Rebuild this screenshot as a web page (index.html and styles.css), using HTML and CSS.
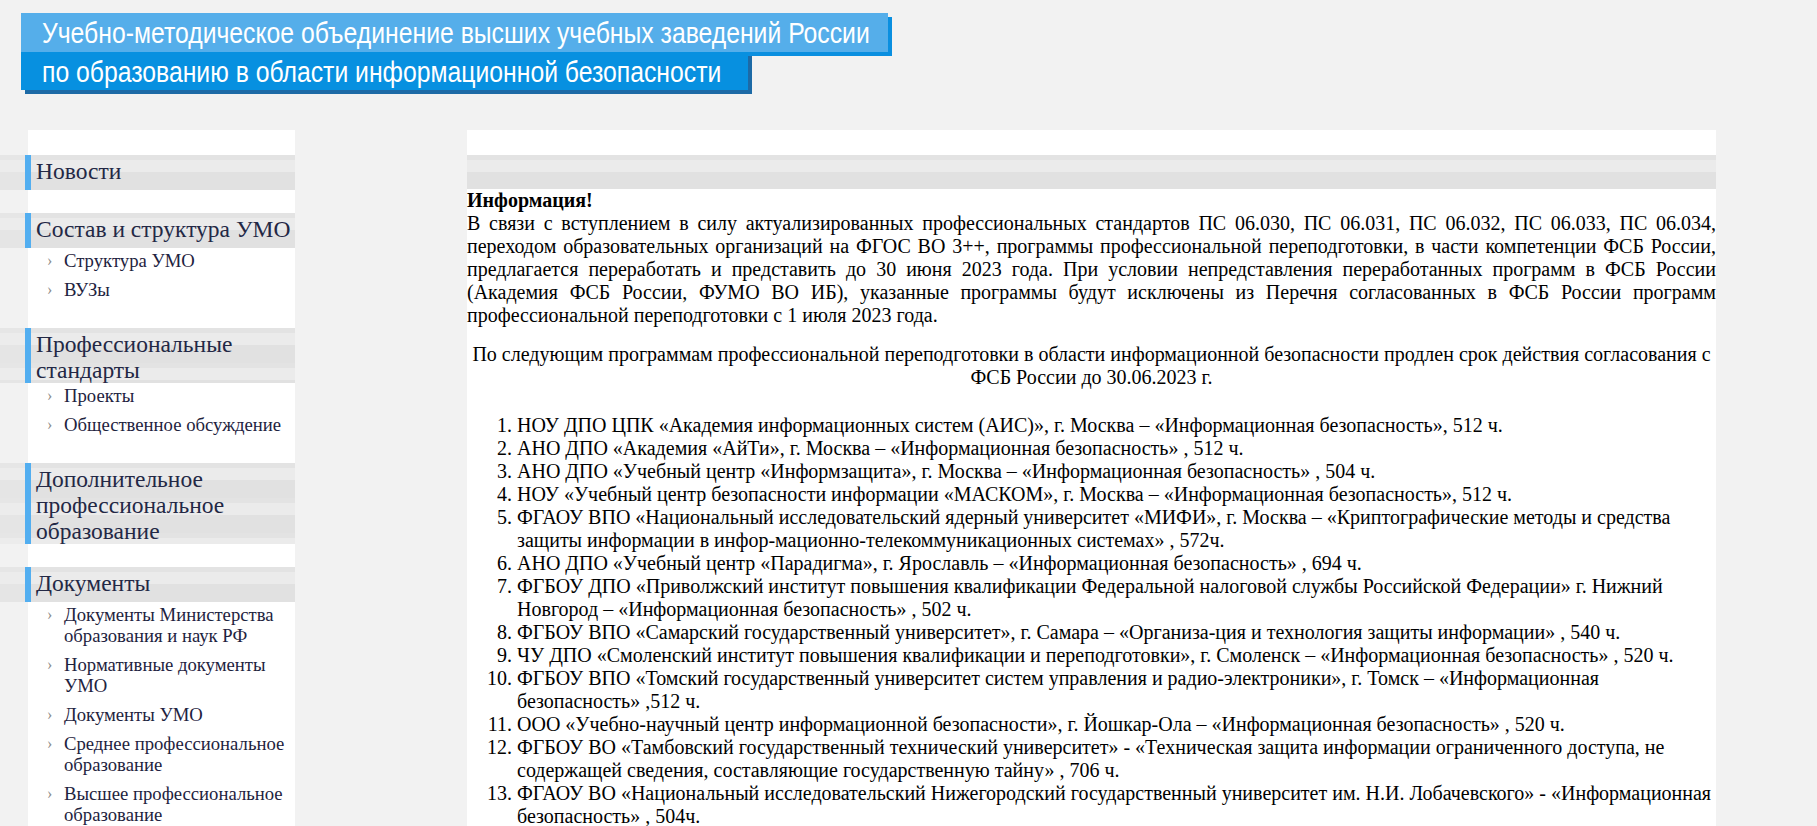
FILE: index.html
```html
<!DOCTYPE html>
<html lang="ru">
<head>
<meta charset="utf-8">
<title>УМО ИБ</title>
<link rel="stylesheet" href="styles.css">
</head>
<body>
<header class="site-header">
  <div class="banner">
    <div class="bar bar-top"><span class="bar-text">Учебно-методическое объединение высших учебных заведений России</span></div>
    <div class="bar bar-bottom"><span class="bar-text">по образованию в области информационной безопасности</span></div>
  </div>
</header>
<div class="layout">
  <aside class="sidebar">
    <section class="menu-block">
      <h2 class="menu-title">Новости</h2>
    </section>
    <section class="menu-block">
      <h2 class="menu-title">Состав и структура УМО</h2>
      <ul class="menu-list">
        <li>Структура УМО</li>
        <li>ВУЗы</li>
      </ul>
    </section>
    <section class="menu-block">
      <h2 class="menu-title">Профессиональные стандарты</h2>
      <ul class="menu-list">
        <li>Проекты</li>
        <li>Общественное обсуждение</li>
      </ul>
    </section>
    <section class="menu-block">
      <h2 class="menu-title">Дополнительное профессиональное образование</h2>
    </section>
    <section class="menu-block">
      <h2 class="menu-title">Документы</h2>
      <ul class="menu-list">
        <li>Документы Министерства образования и наук РФ</li>
        <li>Нормативные документы УМО</li>
        <li>Документы УМО</li>
        <li>Среднее профессиональное образование</li>
        <li>Высшее профессиональное образование</li>
      </ul>
    </section>
  </aside>
  <main class="content">
    <div class="content-band"></div>
    <article class="article">
      <p class="intro"><strong>Информация!</strong><br>В связи с вступлением в силу актуализированных профессиональных стандартов ПС 06.030, ПС 06.031, ПС 06.032, ПС 06.033, ПС 06.034, переходом образовательных организаций на ФГОС ВО 3++, программы профессиональной переподготовки, в части компетенции ФСБ России, предлагается переработать и представить до 30 июня 2023 года. При условии непредставления переработанных программ в ФСБ России (Академия ФСБ России, ФУМО ВО ИБ), указанные программы будут исключены из Перечня согласованных в ФСБ России программ профессиональной переподготовки с 1 июля 2023 года.</p>
      <p class="centered">По следующим программам профессиональной переподготовки в области информационной безопасности продлен срок действия согласования с ФСБ России до 30.06.2023 г.</p>
      <ol class="programs">
        <li>НОУ ДПО ЦПК «Академия информационных систем (АИС)», г. Москва – «Информационная безопасность», 512 ч.</li>
        <li>АНО ДПО «Академия «АйТи», г. Москва – «Информационная безопасность» , 512 ч.</li>
        <li>АНО ДПО «Учебный центр «Информзащита», г. Москва – «Информационная безопасность» , 504 ч.</li>
        <li>НОУ «Учебный центр безопасности информации «МАСКОМ», г. Москва – «Информационная безопасность», 512 ч.</li>
        <li>ФГАОУ ВПО «Национальный исследовательский ядерный университет «МИФИ», г. Москва – «Криптографические методы и средства защиты информации в инфор-мационно-телекоммуникационных системах» , 572ч.</li>
        <li>АНО ДПО «Учебный центр «Парадигма», г. Ярославль – «Информационная безопасность» , 694 ч.</li>
        <li>ФГБОУ ДПО «Приволжский институт повышения квалификации Федеральной налоговой службы Российской Федерации» г. Нижний Новгород – «Информационная безопасность» , 502 ч.</li>
        <li>ФГБОУ ВПО «Самарский государственный университет», г. Самара – «Организа-ция и технология защиты информации» , 540 ч.</li>
        <li>ЧУ ДПО «Смоленский институт повышения квалификации и переподготовки», г. Смоленск – «Информационная безопасность» , 520 ч.</li>
        <li>ФГБОУ ВПО «Томский государственный университет систем управления и радио-электроники», г. Томск – «Информационная безопасность» ,512 ч.</li>
        <li>ООО «Учебно-научный центр информационной безопасности», г. Йошкар-Ола – «Информационная безопасность» , 520 ч.</li>
        <li>ФГБОУ ВО «Тамбовский государственный технический университет» - «Техническая защита информации ограниченного доступа, не содержащей сведения, составляющие государственную тайну» , 706 ч.</li>
        <li>ФГАОУ ВО «Национальный исследовательский Нижегородский государственный университет им. Н.И. Лобачевского» - «Информационная безопасность» , 504ч.</li>
      </ol>
    </article>
  </main>
</div>
</body>
</html>
```

FILE: styles.css
```css
html, body {
  margin: 0;
  padding: 0;
}
body {
  background: #f2f2f2;
  font-family: "Liberation Serif", "Times New Roman", serif;
  color: #000;
  min-width: 1817px;
}

/* ---------- header banner ---------- */
.site-header {
  padding: 13px 0 0 21px;
  height: 130px;
  box-sizing: border-box;
}
.banner {
  display: flex;
  flex-direction: column;
  align-items: flex-start;
}
.bar {
  display: flex;
  align-items: center;
  box-sizing: border-box;
  padding-left: 21px;
  color: #fff;
  font-family: "Liberation Sans", Arial, sans-serif;
  font-size: 30px;
  white-space: nowrap;
  overflow: visible;
}
.bar-top {
  width: 867px;
  height: 39px;
  background: #55aeea;
  box-shadow: 4px 4px 0 #0a8fe0;
  position: relative;
  z-index: 1;
}
.bar-bottom {
  width: 727px;
  height: 38px;
  background: #0790e0;
  box-shadow: 4px 4px 0 #1d6aa6;
  position: relative;
  z-index: 2;
}
.bar-text {
  display: inline-block;
  line-height: 1;
  transform: scaleX(0.825);
  transform-origin: 0 50%;
  margin-top: 1px;
}

/* ---------- layout ---------- */
.layout {
  display: flex;
  align-items: flex-start;
  padding-left: 28px;
  gap: 172px;
}

/* ---------- sidebar ---------- */
.sidebar {
  width: 267px;
  flex: none;
  background: #fff;
  padding-top: 25px;
  min-height: 720px;
}
.menu-block {
  margin-bottom: 23px;
}
.menu-title {
  position: relative;
  margin: 0 0 0 -3px;
  min-height: 35px;
  box-sizing: border-box;
  padding: 3px 0 0 5px;
  border-left: 6px solid #52aef0;
  background: linear-gradient(#e3e3e3 0, #e3e3e3 5px, #ebebeb 5px, #ebebeb 17px, #e1e1e1 17px, #e1e1e1 35px) 0 0 / 100% 35px repeat-y;
  font-family: "Liberation Serif", Georgia, serif;
  font-weight: normal;
  font-size: 23.5px;
  line-height: 26px;
  color: #232845;
}
.menu-title::before {
  content: "";
  position: absolute;
  top: 0;
  bottom: 0;
  left: -31px;
  width: 25px;
  background: linear-gradient(#e6e6e6 0, #e6e6e6 5px, #ececec 5px, #ececec 17px, #e5e5e5 17px, #e5e5e5 35px) 0 0 / 100% 35px repeat-y;
}
.menu-list {
  list-style: none;
  margin: 0;
  padding: 2px 2px 5px 0;
}
.menu-list li {
  display: flex;
  font-family: "Liberation Serif", Georgia, serif;
  font-size: 18.7px;
  line-height: 21px;
  color: #1e2340;
}
.menu-list li + li {
  margin-top: 8px;
}
.menu-list li::before {
  content: "›";
  flex: none;
  width: 17px;
  margin-left: 19px;
  color: #8c8c8c;
  font-size: 16px;
}

/* ---------- content ---------- */
.content {
  width: 1249px;
  flex: none;
  background: #fff;
  padding-top: 25px;
  min-height: 696px;
}
.content-band {
  height: 34px;
  background: linear-gradient(#e3e3e3 0, #e3e3e3 5px, #ebebeb 5px, #ebebeb 17px, #e1e1e1 17px, #e1e1e1 34px);
}
.article {
  font-size: 20px;
  line-height: 23px;
}
.article p {
  margin: 0;
}
.intro {
  text-align: justify;
}
.centered {
  text-align: center;
  padding-top: 16px;
}
.programs {
  margin: 25px 0 0;
  padding-left: 50px;
}
```
